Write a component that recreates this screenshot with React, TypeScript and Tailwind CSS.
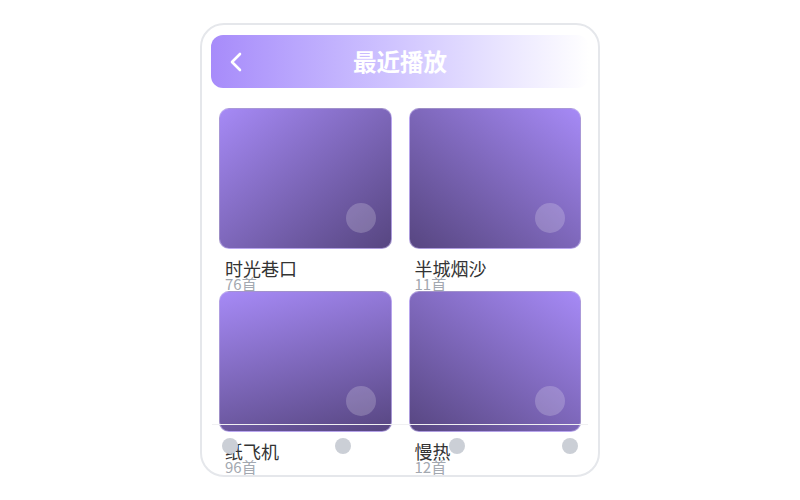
import React from 'react';

interface Playlist {
    name: string;
    count: number;
    gradient: string;
}

const PLAYLISTS: Playlist[] = [
    { name: '时光巷口', count: 76, gradient: 'bg-linear-to-br from-[#a68af6] to-[#574681]' },
    { name: '半城烟沙', count: 11, gradient: 'bg-linear-to-bl from-[#a68af6] to-[#574681]' },
    { name: '纸飞机', count: 96, gradient: 'bg-linear-[165deg] from-[#a68af6] to-[#574681]' },
    { name: '慢热', count: 12, gradient: 'bg-linear-[215deg] from-[#a68af6] to-[#574681]' },
];

export default function App() {
    return (
        <div
            className="w-[800px] h-[500px] bg-white flex items-center justify-center"
            style={{ fontFamily: '"Noto Sans CJK SC", "Noto Sans", sans-serif' }}
        >
            {/* Phone frame */}
            <div className="relative w-[400px] h-[454px] border-2 border-[#e5e7eb] rounded-[24px] overflow-hidden px-[9px] pt-[10px] bg-white">
                {/* Header */}
                <div className="relative h-[53px] rounded-xl bg-linear-to-r from-[#a78bfa] to-white flex items-center justify-center">
                    <button className="absolute left-[19px] top-1/2 -translate-y-1/2 text-white">
                        <svg width="12" height="20" viewBox="0 0 12 20" fill="none">
                            <polyline points="10,2 2,10 10,18" stroke="white" strokeWidth="2.6" strokeLinecap="round" strokeLinejoin="round" />
                        </svg>
                    </button>
                    <h1 className="text-[23.5px] font-bold text-white leading-none">最近播放</h1>
                </div>

                {/* Grid */}
                <div className="grid grid-cols-2 gap-x-[17px] gap-y-[17px] px-[8px] mt-[20px]">
                    {PLAYLISTS.map((p) => (
                        <div key={p.name} className="h-[166px]">
                            <div className={`relative h-[141px] rounded-[10px] border border-[#c9bdf0]/60 ${p.gradient}`}>
                                <div className="absolute right-[15px] bottom-[15px] w-[30px] h-[30px] rounded-full bg-white/20" />
                            </div>
                            <div className="px-[6px] pt-[10px]">
                                <div className="text-[18px] leading-[18px] text-[#333333]">{p.name}</div>
                                <div className="text-[15px] leading-[14px] text-[#a3a8b0]">{p.count}首</div>
                            </div>
                        </div>
                    ))}
                </div>

                {/* Bottom nav */}
                <div className="absolute left-[10px] right-[10px] bottom-0 h-[51px] border-t border-[#f0f0f2] flex items-start justify-between px-[10px] pt-[13px]">
                    <div className="w-4 h-4 rounded-full bg-[#cbcfd6]" />
                    <div className="w-4 h-4 rounded-full bg-[#cbcfd6]" />
                    <div className="w-4 h-4 rounded-full bg-[#cbcfd6]" />
                    <div className="w-4 h-4 rounded-full bg-[#cbcfd6]" />
                </div>
            </div>
        </div>
    );
}
